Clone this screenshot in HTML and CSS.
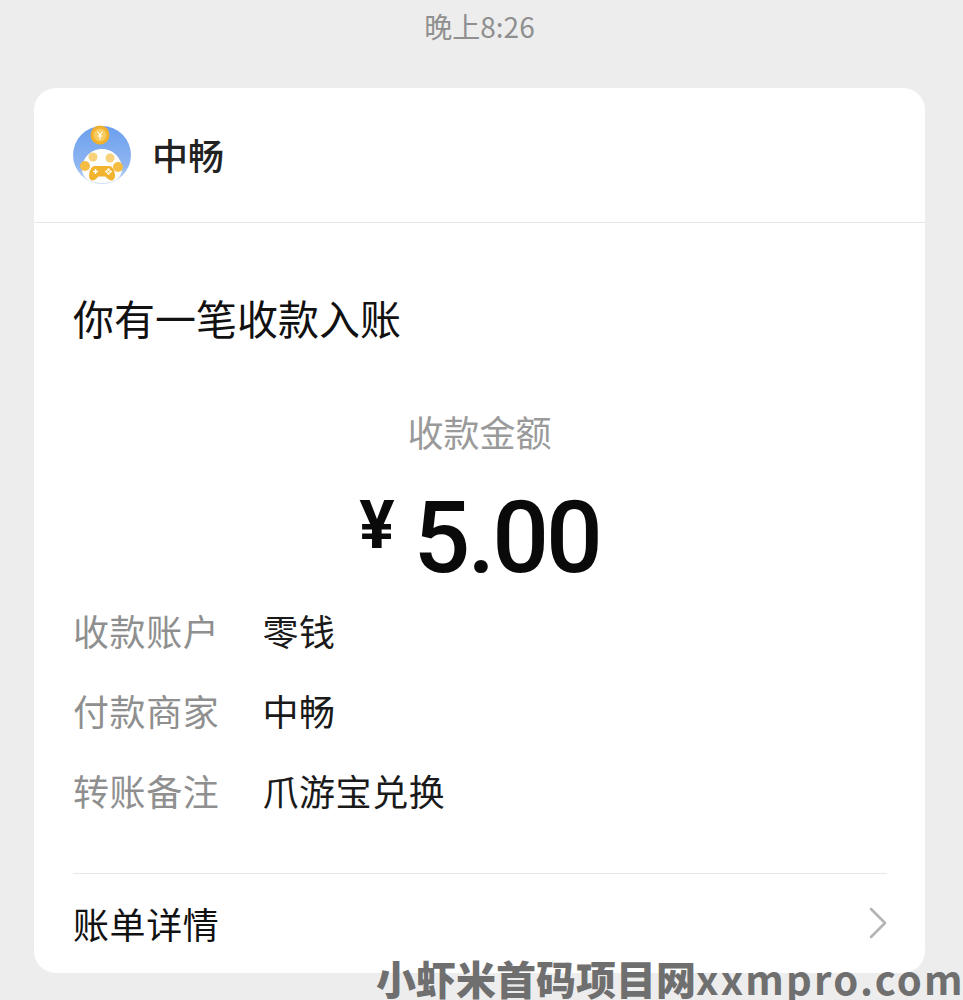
FILE: index.html
```html
<!DOCTYPE html>
<html lang="zh-CN">
  <head>
    <meta charset="UTF-8" />
    <title>收款入账</title>
    <link rel="stylesheet" href="styles.css">
  </head>
  <body>
    <div class="time">晚上8:26</div>

    <div class="card">
      <div class="card-head">
        <svg class="logo" viewBox="0 0 60 60" width="60" height="60">
          <defs>
            <linearGradient id="logoBg" x1="0" y1="0" x2="0" y2="1">
              <stop offset="0" stop-color="#6a9fee" />
              <stop offset="0.7" stop-color="#90b6f0" />
              <stop offset="1" stop-color="#cfe0f8" />
            </linearGradient>
          </defs>
          <circle cx="30" cy="30" r="29" fill="url(#logoBg)" />
          <circle cx="28" cy="10" r="9.500" fill="#f2b02c" />
          <circle cx="28" cy="10" r="6.500" fill="#f8cb5e" />
          <path d="M25.500 6.500l2.500 3.500 2.500-3.500M28 10v4.500M25.500 11h5" fill="none" stroke="#fff" stroke-width="1.2" />
          <path d="M30 24C42 24 50 34 50 44C50 53 42 58 30 58C18 58 10 53 10 44C10 34 18 24 30 24Z" fill="#fdfdfd" />
          <circle cx="21" cy="32" r="4.500" fill="#f7d27a" />
          <circle cx="38" cy="33" r="4.500" fill="#f7d27a" />
          <circle cx="13" cy="41" r="5" fill="#f5bd42" />
          <circle cx="46" cy="42" r="5" fill="#f5bd42" />
          <path d="M23 41H37C41 41 43 47 43 51C43 56 38 57 35 53L33.500 51.500H26.500L25 53C22 57 17 56 17 51C17 47 19 41 23 41Z" fill="#f2b42f" />
          <path d="M23.500 44v5M21 46.500h5" stroke="#fff" stroke-width="1.500" />
          <circle cx="36.500" cy="44.500" r="1.200" fill="#fff" />
          <circle cx="36.500" cy="48.500" r="1.200" fill="#fff" />
          <circle cx="34.500" cy="46.500" r="1.200" fill="#fff" />
          <circle cx="38.500" cy="46.500" r="1.200" fill="#fff" />
        </svg>
        <span class="brand">中畅</span>
      </div>

      <div class="card-body">
        <h1>你有一笔收款入账</h1>
        <div class="amount-label">收款金额</div>
        <div class="amount">
          <span class="yen">¥</span>
          <span class="value">5.00</span>
        </div>
        <div class="rows">
          <div class="row"><span class="key">收款账户</span><span class="val">零钱</span></div>
          <div class="row"><span class="key">付款商家</span><span class="val">中畅</span></div>
          <div class="row"><span class="key">转账备注</span><span class="val">爪游宝兑换</span></div>
        </div>
      </div>

      <div class="card-foot">
        <span>账单详情</span>
        <svg class="chevron" viewBox="0 0 18 32" width="18" height="32">
          <path d="M2 2L16 16L2 30" fill="none" stroke="#b4b4b4" stroke-width="2.6" stroke-linecap="round" stroke-linejoin="round" />
        </svg>
      </div>
    </div>

    <!-- 水印 -->
    <div class="watermark">小虾米首码项目网<span class="watermark-url">xxmpro.com</span></div>
  </body>
</html>
```

FILE: styles.css
```css
html,
body {
  height: 1000px;
  overflow: hidden;
}
body {
  position: relative;
  margin: 0;
  padding: 0 38px 0 34px;
  background-color: #ededed;
  font-family: "Noto Sans CJK SC", "Noto Sans", sans-serif;
  color: #111;
}
.time {
  height: 88px;
  padding-top: 6px;
  box-sizing: border-box;
  text-align: center;
  font-size: 28px;
  line-height: 40px;
  color: #8f8f8f;
}
.card {
  height: 885px;
  background-color: white;
  border-radius: 22px;
  box-sizing: border-box;
}
.card-head {
  display: flex;
  align-items: center;
  gap: 20px;
  height: 135px;
  padding: 0 38px;
  border-bottom: 1px solid #e8e8e8;
  box-sizing: border-box;
}
.logo {
  flex: none;
}
.brand {
  font-size: 36px;
  line-height: 50px;
  margin-top: -3px;
  font-weight: 500;
  color: #222;
}
.card-body {
  padding: 0 39px;
}
h1 {
  margin: 0;
  padding-top: 65px;
  font-size: 41px;
  line-height: 58px;
  font-weight: 400;
}
.amount-label {
  margin-top: 60px;
  text-align: center;
  font-size: 36px;
  line-height: 50px;
  color: #9a9a9a;
}
.amount {
  display: flex;
  justify-content: center;
  align-items: flex-start;
  gap: 19px;
  height: 100px;
  margin-top: 32px;
}
.yen {
  font-family: "Roboto", "Liberation Sans", sans-serif;
  font-size: 66px;
  line-height: 76px;
  font-weight: 700;
  color: #0a0a0a;
}
.value {
  font-family: "Roboto", "Liberation Sans", sans-serif;
  font-size: 100px;
  line-height: 100px;
  font-weight: 500;
  letter-spacing: -3px;
  color: #0a0a0a;
}
.rows {
  display: flex;
  flex-direction: column;
  gap: 30px;
  margin-top: 17px;
}
.row {
  display: flex;
  gap: 43px;
  font-size: 36px;
  line-height: 50px;
  letter-spacing: 0.6px;
}
.key {
  color: #8f8f8f;
}
.val {
  color: #1a1a1a;
}
.card-foot {
  display: flex;
  justify-content: space-between;
  align-items: center;
  height: 97px;
  margin: 58px 38px 0 39px;
  border-top: 1px solid #e8e8e8;
  font-size: 36px;
  letter-spacing: 0.6px;
}
.chevron {
  flex: none;
}
.watermark {
  position: absolute;
  left: 376px;
  top: 957px;
  white-space: nowrap;
  font-size: 40px;
  line-height: 43px;
  font-weight: 900;
  color: #6f6f6f;
}
.watermark-url {
  font-weight: 700;
  letter-spacing: 2.2px;
}
```
